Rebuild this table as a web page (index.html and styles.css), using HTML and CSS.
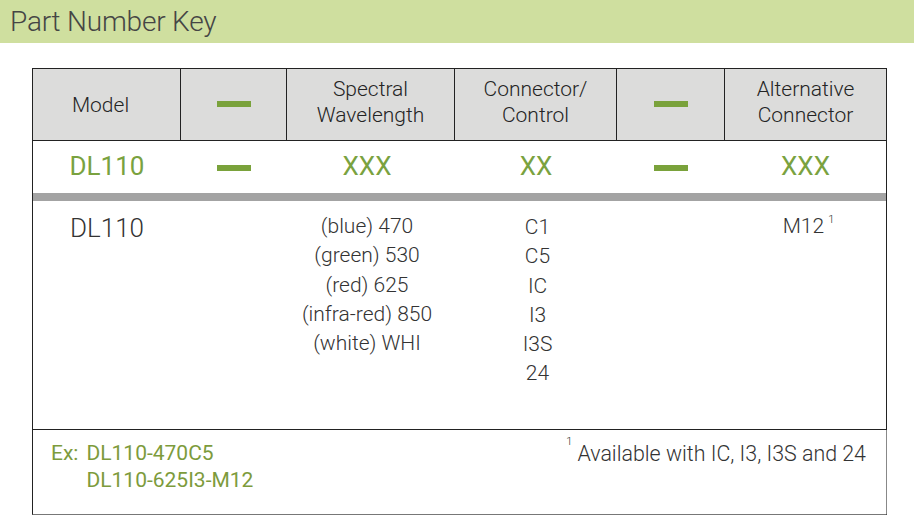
FILE: index.html
```html
<!DOCTYPE html>
<html>
<head>
<meta charset="utf-8">
<link rel="stylesheet" href="styles.css">
</head>
<body>
<div class="banner"><h1 class="title">Part Number Key</h1></div>
<div class="key">
  <div class="row head">
    <div class="cell first">Model</div>
    <div class="cell"><span class="dash"></span></div>
    <div class="cell">Spectral<br>Wavelength</div>
    <div class="cell">Connector/<br>Control</div>
    <div class="cell"><span class="dash"></span></div>
    <div class="cell last">Alternative<br>Connector</div>
  </div>
  <div class="row codes">
    <div class="cell">DL110</div>
    <div class="cell"><span class="dash"></span></div>
    <div class="cell shift">XXX</div>
    <div class="cell">XX</div>
    <div class="cell"><span class="dash"></span></div>
    <div class="cell">XXX</div>
  </div>
  <div class="bar"></div>
  <div class="row body">
    <div class="cell model">DL110</div>
    <div class="cell"></div>
    <div class="cell list shift">
      <span>(blue) 470</span>
      <span>(green) 530</span>
      <span>(red) 625</span>
      <span>(infra-red) 850</span>
      <span>(white) WHI</span>
    </div>
    <div class="cell list conn">
      <span>C1</span>
      <span>C5</span>
      <span>IC</span>
      <span>I3</span>
      <span>I3S</span>
      <span>24</span>
    </div>
    <div class="cell"></div>
    <div class="cell list alt"><span>M12<sup>1</sup></span></div>
  </div>
  <div class="foot">
    <div class="examples">
      <span class="ex">Ex:</span>
      <div class="exlist">
        <span>DL110-470C5</span>
        <span>DL110-625I3-M12</span>
      </div>
    </div>
    <div class="note"><sup>1</sup>Available with IC, I3, I3S and 24</div>
  </div>
</div>
</body>
</html>
```

FILE: styles.css
```css
html, body {
  margin: 0;
  padding: 0;
  background: #ffffff;
  font-family: Roboto, "Liberation Sans", sans-serif;
}
.banner {
  height: 43px;
  background: #cfdf9f;
  display: flex;
  align-items: center;
}
.title {
  margin: 0 0 0 10px;
  font-weight: 300;
  font-size: 28px;
  color: #454545;
  letter-spacing: -0.2px;
}
.key {
  margin: 25px 0 0 32px;
  width: 855px;
  box-sizing: border-box;
  border: 1px solid #222;
  border-bottom-color: #777;
}
.row {
  display: grid;
  grid-template-columns: 148px 106px 168px 162px 108px 1fr;
}
.head {
  height: 71px;
  background: #dcdcdb;
  border-bottom: 1px solid #222;
}
.head .cell {
  border-right: 1px solid #222;
  display: flex;
  align-items: center;
  justify-content: center;
  text-align: center;
  font-size: 21px;
  line-height: 26px;
  font-weight: 300;
  color: #242424;
  padding-bottom: 5px;
}
.head .cell.last {
  border-right: none;
}
.head .cell.first {
  padding-bottom: 0;
  padding-top: 1px;
  padding-right: 12px;
}
.head .cell .dash {
  margin-top: 3px;
}
.dash {
  display: block;
  width: 34px;
  height: 6px;
  background: #7aa23b;
}
.codes {
  height: 52px;
}
.codes .cell {
  display: flex;
  align-items: center;
  justify-content: center;
  font-size: 26px;
  color: #7aa23f;
  padding-bottom: 2px;
}
.codes .cell .dash {
  margin-top: 3px;
}
.shift {
  padding-right: 8px;
}
.bar {
  height: 8px;
  background: #a3a3a3;
}
.body {
  height: 228px;
  border-bottom: 1px solid #222;
}
.body .cell {
  display: flex;
  flex-direction: column;
  align-items: center;
  color: #333;
}
.model {
  font-size: 26px;
  font-weight: 300;
  padding-top: 12px;
  color: #2e2e2e;
}
.list {
  font-size: 21px;
  font-weight: 300;
  line-height: 29.3px;
  padding-top: 11px;
}
.conn {
  padding-top: 12px;
  padding-left: 3px;
}
.alt {
  padding-top: 11px;
  padding-left: 6px;
}
.alt sup, .note sup {
  font-size: 11px;
  vertical-align: top;
  line-height: 1;
  position: relative;
  top: 2px;
  margin-left: 4px;
}
.note sup {
  margin-left: 0;
  margin-right: 5px;
  top: -4px;
}
.foot {
  height: 84px;
  display: flex;
  justify-content: space-between;
  align-items: flex-start;
  padding: 10px 20px 0 18px;
  box-sizing: border-box;
  border-right: 1px solid #888;
  margin-right: -1px;
}
.examples {
  display: flex;
  gap: 8px;
  font-size: 21px;
  line-height: 27px;
  color: #7d9b3c;
}
.exlist {
  display: flex;
  flex-direction: column;
}
.note {
  font-size: 21.4px;
  line-height: 27px;
  font-weight: 300;
  color: #333;
}
```
